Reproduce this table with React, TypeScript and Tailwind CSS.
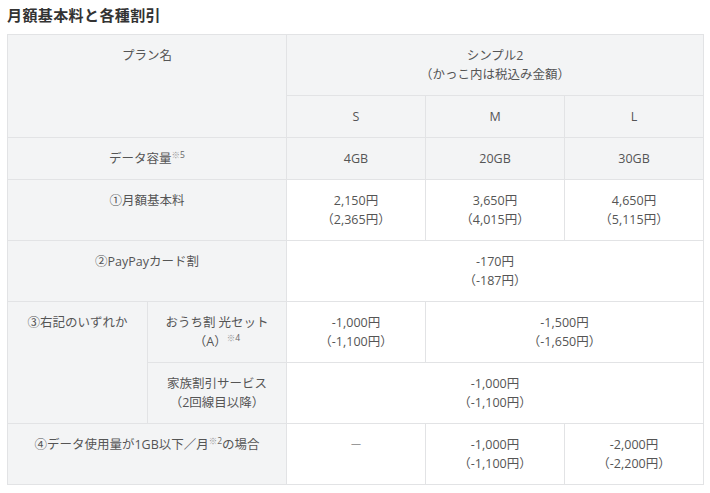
const cell = 'border border-[#e2e3e5] px-2 py-[11px] align-top text-center font-normal';
const head = `${cell} bg-[#f3f4f5]`;
const body = `${cell} bg-white`;

const Sup = ({ n }: { n: string }) => (
  <span className="relative -top-[5px] text-[8.5px] leading-none text-[#999]">
    ※<span className="text-[#666]">{n}</span>
  </span>
);

const Price = ({ a, b }: { a: string; b: string }) => (
  <>
    {a}円
    <br />（{b}円）
  </>
);

export default function App() {
  return (
    <div
      className="min-h-screen bg-white pl-[7px] pt-[5px] text-[#555]"
      style={{ fontFamily: '"Open Sans", "Noto Sans CJK JP", sans-serif' }}
    >
      <h2 className="text-[15px] leading-[20px] font-bold text-[#333] mb-[9px] tracking-[0.4px]">
        月額基本料と各種割引
      </h2>
      <table className="w-[696px] table-fixed border-collapse text-[12.5px] leading-[19px]">
        <colgroup>
          <col className="w-[140px]" />
          <col className="w-[139px]" />
          <col className="w-[139px]" />
          <col className="w-[139px]" />
          <col className="w-[139px]" />
        </colgroup>
        <tbody>
          <tr>
            <th colSpan={2} rowSpan={2} className={head}>
              プラン名
            </th>
            <th colSpan={3} className={head}>
              シンプル2
              <br />
              （かっこ内は税込み金額）
            </th>
          </tr>
          <tr>
            <th className={head}>S</th>
            <th className={head}>M</th>
            <th className={head}>L</th>
          </tr>
          <tr>
            <th colSpan={2} className={head}>
              データ容量<Sup n="5" />
            </th>
            <td className={head}>4GB</td>
            <td className={head}>20GB</td>
            <td className={head}>30GB</td>
          </tr>
          <tr>
            <th colSpan={2} className={head}>
              ①月額基本料
            </th>
            <td className={body}>
              <Price a="2,150" b="2,365" />
            </td>
            <td className={body}>
              <Price a="3,650" b="4,015" />
            </td>
            <td className={body}>
              <Price a="4,650" b="5,115" />
            </td>
          </tr>
          <tr>
            <th colSpan={2} className={head}>
              ②PayPayカード割
            </th>
            <td colSpan={3} className={body}>
              <Price a="-170" b="-187" />
            </td>
          </tr>
          <tr>
            <th rowSpan={2} className={head}>
              ③右記のいずれか
            </th>
            <th className={head}>
              おうち割 光セット
              <br />
              （A）<Sup n="4" />
            </th>
            <td className={body}>
              <Price a="-1,000" b="-1,100" />
            </td>
            <td colSpan={2} className={body}>
              <Price a="-1,500" b="-1,650" />
            </td>
          </tr>
          <tr>
            <th className={head}>
              家族割引サービス
              <br />
              （2回線目以降）
            </th>
            <td colSpan={3} className={body}>
              <Price a="-1,000" b="-1,100" />
            </td>
          </tr>
          <tr>
            <th colSpan={2} className={head}>
              ④データ使用量が1GB以下／月<Sup n="2" />の場合
            </th>
            <td className={`${body} text-[#999]`}>－</td>
            <td className={body}>
              <Price a="-1,000" b="-1,100" />
            </td>
            <td className={body}>
              <Price a="-2,000" b="-2,200" />
            </td>
          </tr>
        </tbody>
      </table>
    </div>
  );
}
